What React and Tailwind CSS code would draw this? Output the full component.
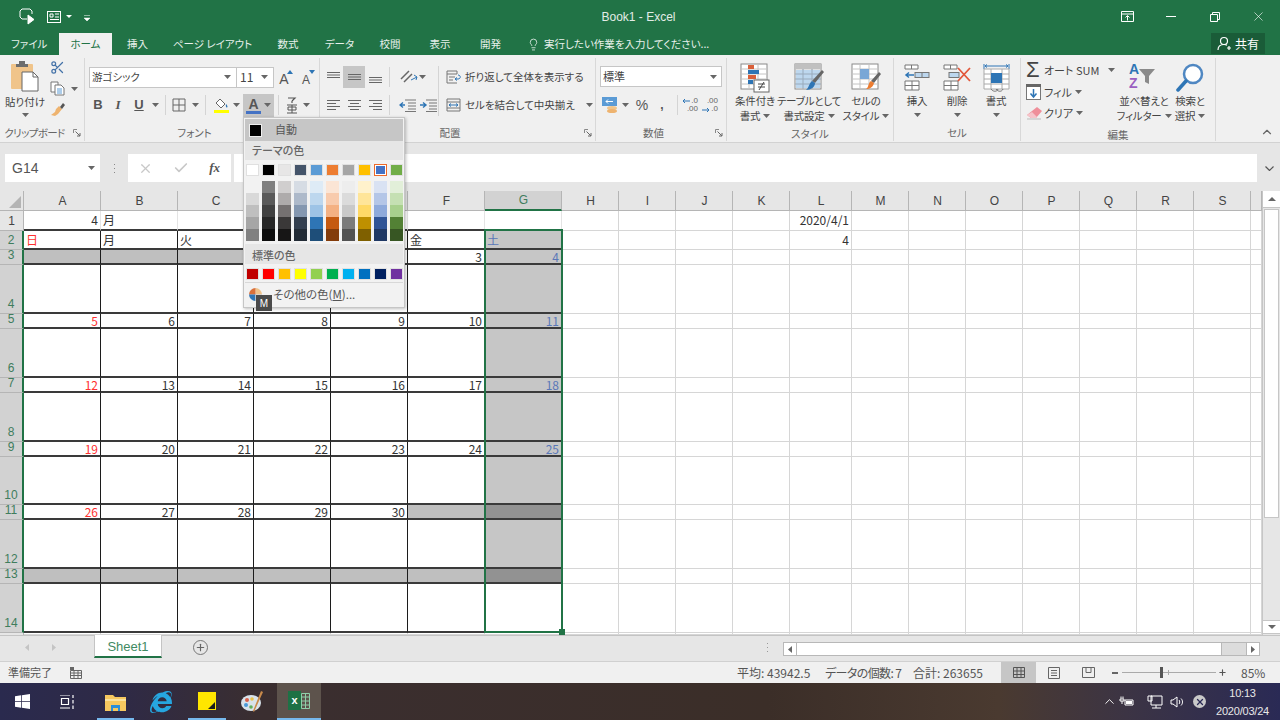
import { Fragment } from 'react'
import { Scissors, Lightbulb, ChevronUp, Check, X, Plus } from 'lucide-react'
import { FaInternetExplorer } from 'react-icons/fa'

const COLS = ['A', 'B', 'C', 'D', 'E', 'F', 'G', 'H', 'I', 'J', 'K', 'L', 'M', 'N', 'O', 'P', 'Q', 'R', 'S', '']
const ROW_COUNT = 15

const THEME = ['#ffffff', '#000000', '#e7e6e6', '#44546a', '#5b9bd5', '#ed7d31', '#a5a5a5', '#ffc000', '#4472c4', '#70ad47']
const SHADES = [
  ['#f2f2f2', '#d9d9d9', '#bfbfbf', '#a6a6a6', '#808080'],
  ['#7f7f7f', '#595959', '#404040', '#262626', '#0d0d0d'],
  ['#d0cece', '#aeabab', '#757171', '#3a3838', '#171616'],
  ['#d6dce4', '#adb9ca', '#8497b0', '#333f4f', '#222b35'],
  ['#deebf6', '#bdd7ee', '#9dc3e6', '#2e75b5', '#1e4e79'],
  ['#fbe5d5', '#f8cbad', '#f4b183', '#c55a11', '#833c0b'],
  ['#ededed', '#dbdbdb', '#c9c9c9', '#7b7b7b', '#525252'],
  ['#fff2cc', '#ffe599', '#ffd966', '#bf9000', '#7f6000'],
  ['#d9e2f3', '#b4c6e7', '#8eaadb', '#2f5496', '#1f3864'],
  ['#e2efd9', '#c5e0b3', '#a8d08d', '#538135', '#375623'],
]
const STANDARD = ['#c00000', '#ff0000', '#ffc000', '#ffff00', '#92d050', '#00b050', '#00b0f0', '#0070c0', '#002060', '#7030a0']

const WEEK = ['日', '月', '火', '水', '木', '金', '土']
const DATES = {
  2: [null, null, null, 1, 2, 3, 4],
  4: [5, 6, 7, 8, 9, 10, 11],
  6: [12, 13, 14, 15, 16, 17, 18],
  8: [19, 20, 21, 22, 23, 24, 25],
  10: [26, 27, 28, 29, 30, null, null],
}

function Chev({ className = '' }) {
  return (
    <svg width="7" height="4" viewBox="0 0 7 4" className={`shrink-0 ${className}`}>
      <path d="M0 0h7L3.5 4z" fill="#666" />
    </svg>
  )
}

function Launcher() {
  return (
    <svg width="8" height="8" viewBox="0 0 8 8" className="shrink-0">
      <path d="M.5 4V.5H4" fill="none" stroke="#888" />
      <path d="M2.5 2.5L7 7M7 4v3H4" fill="none" stroke="#666" />
    </svg>
  )
}

function Sep({ h = 'h-[20px]' }) {
  return <div className={`w-px ${h} bg-[#d4d4d4] shrink-0`} />
}

function Lines({ align }) {
  const rows = [13, 9, 13, 9]
  const x = w => (align === 'left' ? 1 : align === 'right' ? 14 - w : (15 - w) / 2)
  return (
    <svg width="15" height="12" viewBox="0 0 15 12">
      {rows.map((w, i) => (
        <rect key={i} x={x(w)} y={1 + i * 3} width={w} height="1" fill="#666" />
      ))}
    </svg>
  )
}

function VLines({ pos }) {
  const top = pos === 'top' ? 1 : pos === 'mid' ? 3 : 6
  return (
    <svg width="15" height="12" viewBox="0 0 15 12">
      {[0, 1, 2].map(i => (
        <rect key={i} x="1" y={top + i * 2.5} width="13" height="1" fill="#666" />
      ))}
    </svg>
  )
}

function Indent({ flip }) {
  return (
    <svg width="17" height="13" viewBox="0 0 17 13">
      <path d="M6 1h11M9 4h8M9 7h8M9 10h8M6 12.5h11" stroke="#777" fill="none" />
      <path d={flip ? 'M0 6h5M3 3.5L6 6l-3 2.5' : 'M6 6H1M4 3.5L1 6l3 2.5'} stroke="#2e75b5" strokeWidth="1.4" fill="none" />
    </svg>
  )
}

function PasteIcon() {
  return (
    <svg width="28" height="32" viewBox="0 0 28 32">
      <rect x="0" y="4" width="22" height="25" rx="1" fill="#f0c48a" />
      <path d="M5 4h12v3H5zM8 1h6v3H8z" fill="#6d6d6d" />
      <path d="M11 12h11l5 5v14H11z" fill="#fff" stroke="#666" />
      <path d="M22 12v5h5" fill="none" stroke="#666" />
    </svg>
  )
}

function CopyIcon() {
  return (
    <svg width="15" height="15" viewBox="0 0 15 15">
      <path d="M1 1h7v10H1z" fill="#fff" stroke="#777" />
      <path d="M5 4h6l3 3v7H5z" fill="#fff" stroke="#777" />
      <path d="M7 8h5M7 10h5M7 12h5" stroke="#5b9bd5" />
    </svg>
  )
}

function BrushIcon() {
  return (
    <svg width="16" height="15" viewBox="0 0 16 15">
      <path d="M9 4l3 3-4 5-3 2-4-1 4-3 1-3z" fill="#eeb36f" />
      <path d="M10 5l3-4 2 2-3 4z" fill="#555" />
    </svg>
  )
}

function BoxBorderIcon() {
  return (
    <svg width="14" height="14" viewBox="0 0 14 14">
      <path d="M1 1h12v12H1zM7 1v12M1 7h12" fill="none" stroke="#666" />
    </svg>
  )
}

function FillIcon() {
  return (
    <svg width="16" height="16" viewBox="0 0 16 16">
      <path d="M6 2l5 5-4 4-5-5z" fill="#fff" stroke="#666" />
      <path d="M12 7c1.500 1.500 2 3 1 3.500s-1.500-2-1-3.500z" fill="#2e75b5" />
      <rect x="0" y="13" width="15" height="3" fill="#ffff00" />
    </svg>
  )
}

function KanaIcon() {
  return (
    <svg width="12" height="17" viewBox="0 0 12 17">
      <path d="M2 1h7L6 4M6 4v2" stroke="#555" strokeWidth="1.200" fill="none" />
      <path d="M1 8h10M2 10h8v3H2zM6 8v8M1 16h10" stroke="#555" fill="none" />
    </svg>
  )
}

function GrowFont({ up }) {
  return (
    <div className="relative w-[18px] h-[18px] flex items-end justify-center">
      <span className={`text-[#555] leading-none font-['Liberation_Sans',sans-serif] ${up ? 'text-[14px]' : 'text-[12px]'}`}>A</span>
      <svg width="6" height="4" viewBox="0 0 6 4" className="absolute top-[2px] right-0">
        <path d={up ? 'M0 4h6L3 0z' : 'M0 0h6L3 4z'} fill="#2e75b5" />
      </svg>
    </div>
  )
}

function OrientIcon() {
  return (
    <svg width="20" height="16" viewBox="0 0 20 16">
      <path d="M2 10L10 2M5 13l8-8" stroke="#666" strokeWidth="1.500" fill="none" />
      <path d="M12 11l6-3M15 6l3 2-1 3" stroke="#2e75b5" fill="none" />
    </svg>
  )
}

function WrapIcon() {
  return (
    <svg width="16" height="14" viewBox="0 0 16 14" className="shrink-0">
      <path d="M1 1h10v3H1zM1 4v9h10M3 7h6M3 10h4" fill="none" stroke="#777" />
      <path d="M12 5c3 0 3 4 0 4H9M11 7.500L9 9l2 1.500" fill="none" stroke="#2e75b5" />
    </svg>
  )
}

function MergeIcon() {
  return (
    <svg width="15" height="14" viewBox="0 0 15 14" className="shrink-0">
      <path d="M1 1h13v12H1zM1 4h13M1 10h13" fill="none" stroke="#777" />
      <path d="M3 7h9M5 5.500L3 7l2 1.500M10 5.500L12 7l-2 1.500" fill="none" stroke="#2e75b5" />
    </svg>
  )
}

function AccountIcon() {
  return (
    <svg width="16" height="16" viewBox="0 0 16 16">
      <rect x="0" y="0" width="15" height="9" fill="#5b9bd5" />
      <path d="M4 4.500h7M6 2.500L4 4.500l2 2" stroke="#fff" fill="none" />
      <ellipse cx="10" cy="11" rx="5" ry="2" fill="#f0c48a" />
      <ellipse cx="10" cy="14" rx="5" ry="2" fill="#eeb36f" />
    </svg>
  )
}

function DecimalIcon({ flip }) {
  return (
    <div className="relative w-[16px] h-[17px] text-[#666] text-[8px] leading-[8px] font-['Liberation_Sans',sans-serif]">
      <div className="text-right">{flip ? '.00' : '.0'}</div>
      <div className="text-right">{flip ? '.0' : '.00'}</div>
      <svg width="8" height="6" viewBox="0 0 8 6" className={`absolute left-0 ${flip ? 'top-[10px]' : 'top-[1px]'}`}>
        <path d={flip ? 'M0 3h7M5 1l2 2-2 2' : 'M8 3H1M3 1L1 3l2 2'} stroke="#2e75b5" fill="none" />
      </svg>
    </div>
  )
}

function TableBase({ children }) {
  return (
    <svg width="30" height="30" viewBox="0 0 30 30">
      <rect x="1" y="1" width="26" height="25" fill="#fff" stroke="#8a8a8a" />
      <path d="M1 6h26M1 11h26M1 16h26M1 21h26M9 1v25M18 1v25" stroke="#c4c4c4" />
      {children}
    </svg>
  )
}

function CondIcon() {
  return (
    <TableBase>
      <rect x="8" y="2" width="6" height="4" fill="#d9603a" />
      <rect x="8" y="7" width="11" height="4" fill="#2e75b5" />
      <rect x="8" y="12" width="8" height="4" fill="#d9603a" />
      <rect x="8" y="17" width="5" height="4" fill="#2e75b5" />
      <rect x="14" y="17" width="15" height="12" fill="#fff" stroke="#666" />
      <path d="M18 21h7M18 24h7M24 19l-5 8" stroke="#444" fill="none" />
    </TableBase>
  )
}

function TableStyleIcon() {
  return (
    <TableBase>
      <rect x="1" y="1" width="26" height="5" fill="#c0c0c0" />
      <rect x="2" y="7" width="24" height="18" fill="#bdd7ee" />
      <path d="M1 11h26M1 16h26M1 21h26M9 6v20M18 6v20" stroke="#9ab" />
      <path d="M28 7l2 2-9 11-3-2z" fill="#666" />
      <path d="M18 18l3 2c0 4-4 7-9 7 3-2 3-7 6-9z" fill="#2e75b5" />
    </TableBase>
  )
}

function CellStyleIcon() {
  return (
    <TableBase>
      <rect x="9" y="6" width="9" height="10" fill="#7aa7d6" />
      <path d="M28 9l2 2-7 9-3-2z" fill="#666" />
      <path d="M20 18l3 2c-1 4-4 6-8 6 3-2 2-6 5-8z" fill="#ed7d31" />
    </TableBase>
  )
}

function InsertCellIcon() {
  return (
    <svg width="26" height="27" viewBox="0 0 26 27">
      <path d="M1 1h13v4H1zM7.500 1v4M1 17h14v9H1zM1 21.500h14M8 17v9" fill="#fff" stroke="#777" />
      <rect x="11" y="8.500" width="14" height="5" fill="#bdd7ee" stroke="#777" />
      <path d="M18 8.500v5" stroke="#777" />
      <path d="M10 11H2M5 8.500L2 11l3 2.500" stroke="#2e75b5" strokeWidth="1.500" fill="none" />
    </svg>
  )
}

function DeleteCellIcon() {
  return (
    <svg width="29" height="27" viewBox="0 0 29 27">
      <path d="M1 1h13v4H1zM7.500 1v4M1 17h14v9H1zM1 21.500h14M8 17v9" fill="#fff" stroke="#777" />
      <rect x="6" y="8.500" width="10" height="5" fill="#bdd7ee" stroke="#777" />
      <path d="M15 4l12 13M27 4L15 17" stroke="#e2573a" strokeWidth="1.800" />
    </svg>
  )
}

function FormatCellIcon() {
  return (
    <svg width="27" height="29" viewBox="0 0 27 29">
      <path d="M1 1v5M26 1v5M2 3h23M4 1.500L2 3l2 1.500M23 1.500L25 3l-2 1.500" stroke="#2e75b5" fill="none" />
      <path d="M1 6h25v20H1zM1 11h25M1 16h25M1 21h25M8 6v20M19 6v20" fill="#fff" stroke="#aaa" />
      <rect x="8" y="10" width="11" height="10" fill="#2e75b5" />
      <path d="M8 26c2 3 6 3 7 0M13 26c2 3 6 3 7 0" stroke="#777" fill="none" />
    </svg>
  )
}

function FillDownIcon() {
  return (
    <svg width="15" height="16" viewBox="0 0 15 16">
      <rect x="0.500" y="0.500" width="14" height="15" fill="#fff" stroke="#777" />
      <rect x="0" y="0" width="15" height="3" fill="#666" />
      <path d="M7.500 5v8M4.500 9.500l3 3.500 3-3.500" stroke="#2e75b5" strokeWidth="1.500" fill="none" />
    </svg>
  )
}

function EraserIcon() {
  return (
    <svg width="17" height="14" viewBox="0 0 17 14">
      <path d="M11 1l5 4-6 7H5L1 9z" fill="#ef8f9a" />
      <path d="M1 9l4 3h5l1-1-5-5z" fill="#f6c4ca" />
      <path d="M1 13h14" stroke="#bbb" />
    </svg>
  )
}

function SortIcon() {
  return (
    <div className="relative w-[30px] h-[31px] flex">
      <div className="flex flex-col text-[14px] leading-[14px] font-bold font-['Liberation_Sans',sans-serif]">
        <span className="text-[#2e75b5]">A</span>
        <span className="text-[#9a5fc0]">Z</span>
      </div>
      <svg width="16" height="15" viewBox="0 0 16 15" className="mt-[7px]">
        <path d="M0 0h16l-6 7v8l-4-2V7z" fill="#8a8a8a" />
      </svg>
    </div>
  )
}

function FindIcon() {
  return (
    <svg width="28" height="29" viewBox="0 0 28 29">
      <circle cx="17" cy="11" r="9" fill="#fff" stroke="#4f87c2" strokeWidth="2.500" />
      <path d="M10 18L2 27" stroke="#2e75b5" strokeWidth="3.500" strokeLinecap="round" />
    </svg>
  )
}

function BigButton({ w, iconH = 'h-[33px]', icon, lines, chevBelow }) {
  return (
    <div className={`${w} flex flex-col items-center shrink-0`}>
      <div className={`${iconH} flex items-center justify-center`}>{icon}</div>
      {lines.map((l, i) => (
        <div key={i} className="h-[15px] flex items-center gap-[3px] whitespace-nowrap text-[10.5px] tracking-[-0.2px]">
          {l}
          {i === lines.length - 1 && !chevBelow && <Chev />}
        </div>
      ))}
      {chevBelow && <div className="h-[14px] flex items-center"><Chev /></div>}
    </div>
  )
}

function Group({ w, label, launcher, children }) {
  return (
    <div className={`${w} h-[83px] shrink-0 flex flex-col border-r border-[#d8d8d8]`}>
      <div className="h-[66px] flex">{children}</div>
      <div className={`relative flex-1 flex items-center justify-center pt-[3px] whitespace-nowrap text-[10.5px] text-[#666] ${launcher ? 'pr-[15px]' : ''}`}>
        {label}
        {launcher && <div className="absolute right-[3px] top-[7px]"><Launcher /></div>}
      </div>
    </div>
  )
}

function Ribbon() {
  return (
    <div className="h-[88px] bg-[#f0f0f0] border-b border-[#d2d2d2] pt-[3px] flex text-[#444] font-['Noto_Sans_CJK_JP',sans-serif]">
      <Group w="w-[85px]" label={<span className="tracking-[-0.6px]">クリップボード</span>} launcher>
        <div className="w-[50px] flex flex-col items-center pt-[2px]">
          <PasteIcon />
          <div className="mt-[2px] h-[15px] flex items-center text-[10.5px]">貼り付け</div>
          <div className="h-[12px] flex items-center"><Chev /></div>
        </div>
        <div className="flex flex-col gap-[6px] pt-[2px]">
          <Scissors size={15} color="#4472a8" />
          <div className="flex items-center gap-[6px]"><CopyIcon /><Chev /></div>
          <BrushIcon />
        </div>
      </Group>

      <Group w="w-[235px]" label="フォント" launcher>
        <div className="flex flex-col pl-[4px] pt-[8px]">
          <div className="h-[22px] flex items-center">
            <div className="w-[148px] h-[21px] bg-white border border-[#c6c6c6] flex items-center justify-between pl-[2px] pr-[5px] text-[10.5px]">
              游ゴシック<Chev />
            </div>
            <div className="w-[37px] h-[21px] bg-white border border-l-0 border-[#c6c6c6] flex items-center justify-between pl-[3px] pr-[5px] text-[12px]">
              11<Chev />
            </div>
            <div className="flex gap-[4px] ml-[1px]"><GrowFont up /><GrowFont /></div>
          </div>
          <div className="h-[24px] mt-[5px] flex items-center text-[#555] font-['Liberation_Sans',sans-serif] text-[13px]">
            <span className="w-[18px] text-center font-bold">B</span>
            <span className="w-[22px] text-center italic font-['Liberation_Serif',serif] font-bold">I</span>
            <span className="w-[20px] text-center underline font-bold">U</span>
            <Chev className="ml-[3px] mr-[6px]" />
            <Sep />
            <div className="ml-[6px] mr-[6px]"><BoxBorderIcon /></div>
            <Chev className="mr-[6px]" />
            <Sep />
            <div className="ml-[8px] mr-[3px]"><FillIcon /></div>
            <Chev className="mr-[3px]" />
            <div className="w-[31px] h-[23px] bg-[#c6c6c6] flex items-center gap-[3px] pl-[3px]">
              <div className="flex flex-col items-center w-[15px]">
                <span className="text-[14px] leading-[14px] font-bold text-[#555]">A</span>
                <div className="w-[15px] h-[3px] bg-[#4472c4]" />
              </div>
              <Chev />
            </div>
            <div className="mx-[4px]"><Sep /></div>
            <div className="ml-[3px] mr-[5px]"><KanaIcon /></div>
            <Chev />
          </div>
        </div>
      </Group>

      <Group w="w-[276px]" label="配置" launcher>
        <div className="w-[118px] shrink-0 flex flex-col pl-[3px] pt-[8px]">
          <div className="h-[22px] flex items-center">
            <div className="w-[20px] flex justify-center"><VLines pos="top" /></div>
            <div className="w-[22px] h-[22px] bg-[#c6c6c6] flex justify-center items-center"><VLines pos="mid" /></div>
            <div className="w-[20px] flex justify-center"><VLines pos="bot" /></div>
            <div className="mx-[4px]"><Sep /></div>
            <div className="ml-[5px]"><OrientIcon /></div>
            <Chev />
          </div>
          <div className="h-[24px] mt-[5px] flex items-center">
            <div className="w-[20px] flex justify-center"><Lines align="left" /></div>
            <div className="w-[22px] flex justify-center"><Lines align="center" /></div>
            <div className="w-[20px] flex justify-center"><Lines align="right" /></div>
            <div className="mx-[4px]"><Sep /></div>
            <div className="ml-[5px] mr-[4px]"><Indent /></div>
            <Indent flip />
          </div>
        </div>
        <div className="mr-[7px] mt-[8px] h-[50px]"><Sep h="h-[50px]" /></div>
        <div className="flex flex-col pt-[8px] text-[10.5px]">
          <div className="h-[22px] flex items-center gap-[3px] whitespace-nowrap"><WrapIcon />折り返して全体を表示する</div>
          <div className="h-[24px] mt-[5px] flex items-center gap-[4px] whitespace-nowrap"><MergeIcon />セルを結合して中央揃え<Chev className="ml-[7px]" /></div>
        </div>
      </Group>

      <Group w="w-[131px]" label="数値" launcher>
        <div className="flex flex-col pl-[4px] pt-[8px]">
          <div className="w-[122px] h-[21px] bg-white border border-[#c6c6c6] flex items-center justify-between pl-[2px] pr-[4px] text-[11px]">
            標準<Chev />
          </div>
          <div className="h-[24px] mt-[6px] flex items-center pl-[2px]">
            <AccountIcon />
            <Chev className="ml-[4px] mr-[4px]" />
            <span className="w-[18px] text-center text-[14px] text-[#555] font-['Liberation_Sans',sans-serif]">%</span>
            <span className="w-[22px] text-center text-[12px] font-bold text-[#555] font-['Liberation_Sans',sans-serif]">,</span>
            <div className="ml-[4px] mr-[4px]"><Sep /></div>
            <DecimalIcon />
            <div className="ml-[4px]"><DecimalIcon flip /></div>
          </div>
        </div>
      </Group>

      <Group w="w-[167px]" label="スタイル">
        <div className="pl-[1px] flex pt-[5px]">
          <BigButton w="w-[54px]" iconH="h-[30px]" icon={<CondIcon />} lines={['条件付き', '書式']} />
          <BigButton w="w-[54px]" iconH="h-[30px]" icon={<TableStyleIcon />} lines={['テーブルとして', '書式設定']} />
          <BigButton w="w-[60px]" iconH="h-[30px]" icon={<CellStyleIcon />} lines={['セルの', 'スタイル']} />
        </div>
      </Group>

      <Group w="w-[127px]" label="セル">
        <div className="pl-[3px] flex pt-[3px]">
          <BigButton w="w-[40px]" iconH="h-[32px]" icon={<InsertCellIcon />} lines={['挿入']} chevBelow />
          <BigButton w="w-[40px]" iconH="h-[32px]" icon={<DeleteCellIcon />} lines={['削除']} chevBelow />
          <BigButton w="w-[38px]" iconH="h-[32px]" icon={<FormatCellIcon />} lines={['書式']} chevBelow />
        </div>
      </Group>

      <Group w="w-[195px]" label="編集">
        <div className="w-[97px] flex flex-col pl-[5px] pt-[1px] text-[11px]">
          <div className="h-[22px] flex items-center whitespace-nowrap">
            <span className="w-[18px] text-[22px] leading-none text-[#444] font-['Liberation_Sans',sans-serif]">Σ</span>
            <span className="w-[58px]">オート SUM</span>
            <Chev className="ml-[6px]" />
          </div>
          <div className="h-[22px] flex items-center"><div className="w-[18px]"><FillDownIcon /></div>フィル<Chev className="ml-[3px]" /></div>
          <div className="h-[22px] flex items-center"><div className="w-[18px]"><EraserIcon /></div>クリア<Chev className="ml-[3px]" /></div>
        </div>
        <BigButton w="w-[52px]" iconH="h-[35px]" icon={<div className="pt-[4px]"><SortIcon /></div>} lines={['並べ替えと', 'フィルター']} />
        <BigButton w="w-[40px]" iconH="h-[35px]" icon={<div className="pt-[4px]"><FindIcon /></div>} lines={['検索と', '選択']} />
      </Group>

      <div className="flex-1 flex items-end justify-end pr-[6px] pb-[3px]">
        <ChevronUp size={14} color="#666" />
      </div>
    </div>
  )
}

function Titlebar() {
  return (
    <div className="h-[33px] bg-[#217346] flex items-center text-[#e3ece7] font-['Liberation_Sans',sans-serif]">
      <div className="w-[590px] flex items-center pl-[19px]">
        <svg width="17" height="17" viewBox="0 0 17 17" fill="none" stroke="#fff">
          <path d="M8 11H3l-2-2V3l2-2h8l2 2v3" />
          <path d="M9 7v9l6-4.500z" fill="#fff" />
        </svg>
        <svg width="14" height="12" viewBox="0 0 14 12" className="ml-[11px]" fill="none" stroke="#fff">
          <rect x="0.500" y="0.500" width="13" height="11" />
          <path d="M3 3h3v3H3zM8 3h4M8 6h4M3 8.500h9" />
        </svg>
        <svg width="6" height="3" viewBox="0 0 6 3" className="ml-[5px]"><path d="M0 0h6L3 3z" fill="#fff" /></svg>
        <svg width="6" height="6" viewBox="0 0 6 6" className="ml-[12px] mt-[2px]"><path d="M0 .5h6M0 3h6L3 6z" fill="#fff" stroke="#fff" strokeWidth=".5" /></svg>
      </div>
      <div className="w-[97px] text-center text-[12px] whitespace-nowrap">Book1 - Excel</div>
      <div className="flex-1 flex items-center justify-end">
        <div className="w-[44px] flex justify-center">
          <svg width="13" height="11" viewBox="0 0 13 11" fill="none" stroke="#fff"><path d="M.5.5h12v10H.5zM.5 3h12M6.500 9.500V5M4.500 6.500l2-2 2 2" /></svg>
        </div>
        <div className="w-[44px] flex justify-center"><div className="w-[10px] h-px bg-white" /></div>
        <div className="w-[43px] flex justify-center">
          <svg width="10" height="10" viewBox="0 0 10 10" fill="none" stroke="#fff"><path d="M.5 2.500h7v7h-7zM2.500 2.500v-2h7v7h-2" /></svg>
        </div>
        <div className="w-[44px] flex justify-center"><X size={15} color="#fff" strokeWidth={1} /></div>
      </div>
    </div>
  )
}

const TABS = [
  ['w-[59px] pl-[11px] text-left', 'ファイル'],
  ['w-[53px] text-center bg-[#f0f0f0] text-[#217346]', 'ホーム'],
  ['w-[51px] text-center', '挿入'],
  ['w-[99px] text-center', 'ページ レイアウト'],
  ['w-[52px] text-center', '数式'],
  ['w-[51px] text-center', 'データ'],
  ['w-[50px] text-center', '校閲'],
  ['w-[50px] text-center', '表示'],
  ['w-[51px] text-center', '開発'],
]

function Tabs() {
  return (
    <div className="h-[22px] bg-[#217346] flex text-[#e8f1ec] text-[10.5px] leading-[22px] font-['Noto_Sans_CJK_JP',sans-serif]">
      {TABS.map(([cls, label]) => (
        <div key={label} className={`h-[22px] whitespace-nowrap ${cls}`}>{label}</div>
      ))}
      <div className="flex items-center pl-[11px] gap-[4px] whitespace-nowrap">
        <Lightbulb size={13} color="#e8f1ec" strokeWidth={1.500} />
        実行したい作業を入力してください...
      </div>
      <div className="ml-auto mr-[15px] w-[54px] h-[21px] bg-[#1a5c38] flex items-center justify-center gap-[3px] text-[12px] text-white">
        <svg width="15" height="15" viewBox="0 0 15 15" fill="none" stroke="#fff" strokeWidth="1.200">
          <circle cx="7" cy="5" r="3.500" />
          <path d="M1 14c0-4 3-5.500 6-5.500 1 0 2 .2 3 .6M10 12h4M12 10v4" />
        </svg>
        共有
      </div>
    </div>
  )
}

function FormulaBar() {
  return (
    <div className="h-[48px] bg-[#e6e6e6] flex items-center pt-[2px] pl-[5px] pr-[5px] font-['Liberation_Sans',sans-serif]">
      <div className="w-[95px] h-[28px] bg-white flex items-center justify-between pl-[7px] pr-[5px] text-[14px] text-[#555]">
        G14<Chev />
      </div>
      <div className="w-[28px] flex justify-center">
        <svg width="3" height="11" viewBox="0 0 3 11"><path d="M1 1h1v1H1zM1 5h1v1H1zM1 9h1v1H1z" fill="#888" /></svg>
      </div>
      <div className="w-[103px] h-[28px] bg-white flex items-center justify-between pl-[10px] pr-[11px]">
        <X size={15} color="#c8c8c8" strokeWidth={2} />
        <Check size={16} color="#c8c8c8" strokeWidth={2.500} />
        <span className="text-[13px] italic font-bold text-[#555] font-['Liberation_Serif',serif]">fx</span>
      </div>
      <div className="ml-[3px] flex-1 h-[28px] bg-white" />
      <div className="w-[18px] flex justify-end pr-[1px]">
        <svg width="9" height="5" viewBox="0 0 9 5" fill="none" stroke="#555" strokeWidth="1.200"><path d="M.5.500l4 4 4-4" /></svg>
      </div>
    </div>
  )
}

function cellContent(r, c) {
  if (r === 0 && c === 0) return { text: '4', right: true }
  if (r === 0 && c === 1) return { text: '月' }
  if (r === 0 && c === 11) return { text: '2020/4/1', right: true }
  if (r === 1 && c === 11) return { text: '4', right: true }
  if (r === 1 && c < 7) return { text: WEEK[c], cal: true }
  if (DATES[r] && c < 7 && DATES[r][c] != null) return { text: DATES[r][c], right: true, cal: true }
  return null
}

function cellFill(r, c) {
  if (c === 6 && r >= 1 && r <= 12) return r === 10 || r === 12 ? 'bg-[#929292]' : 'bg-[#c6c6c6]'
  if (r === 2 && c < 3) return 'bg-[#bfbfbf]'
  if (r === 10 && c === 5) return 'bg-[#bfbfbf]'
  if (r === 12 && c < 6) return 'bg-[#bfbfbf]'
  return 'bg-white'
}

function cellBorder(r, c) {
  const inCal = c < 7 && r >= 1 && r < 14
  const right = inCal ? 'border-r-[#1c1c1c]' : c < 7 && r === 0 ? 'border-r-[#e4e4e4]' : 'border-r-[#d6d6d6]'
  const bottom = c < 7 && r < 14 ? 'border-b-2 border-b-[#3a3a3a]' : 'border-b border-b-[#d6d6d6]'
  return `${right} ${bottom}`
}

function Sheet() {
  return (
    <div className="relative h-[444px] flex bg-[#e6e6e6] overflow-hidden">
      <div className="grid grid-cols-[24px_77px_77px_76px_77px_77px_77px_77px_57px_57px_57px_57px_62px_57px_57px_57px_57px_57px_57px_57px_11px] grid-rows-[20px_20px_19px_15px_49px_15px_49px_15px_49px_15px_48px_15px_49px_15px_49px_2px] w-[1262px] font-['Noto_Sans_CJK_JP',sans-serif] text-[12px] text-[#333]">
        <div className="bg-[#e6e6e6] border-r border-b border-[#b5b5b5] flex items-end justify-end pr-[2px] pb-[2px]">
          <svg width="12" height="12" viewBox="0 0 12 12"><path d="M12 0v12H0z" fill="#b4b4b4" /></svg>
        </div>
        {COLS.map(col => (
          <div
            key={col || 'end'}
            className={
              col === 'G'
                ? 'bg-[#d2d2d2] border-r border-b-2 border-r-[#b5b5b5] border-b-[#217346] flex items-center justify-center pl-px text-[#3f7d5d] font-["Liberation_Sans",sans-serif] text-[12px]'
                : 'bg-[#e6e6e6] border-r border-b border-[#b5b5b5] flex items-center justify-center pl-px text-[#444] font-["Liberation_Sans",sans-serif] text-[12px]'
            }
          >
            {col}
          </div>
        ))}
        {Array.from({ length: ROW_COUNT }, (_, r) => (
          <Fragment key={r}>
            <div
              className={
                r >= 1 && r <= 13
                  ? 'bg-[#d2d2d2] border-r-2 border-r-[#217346] border-b border-b-[#b5b5b5] flex items-end justify-center pb-[3px] text-[#3f7d5d] leading-[11px] font-["Liberation_Sans",sans-serif] text-[12px]'
                  : 'bg-[#e6e6e6] border-r border-b border-[#b5b5b5] flex items-end justify-center pb-[2px] text-[#444] leading-[13px] font-["Liberation_Sans",sans-serif] text-[12px]'
              }
            >
              {r < 14 ? r + 1 : ''}
            </div>
            {COLS.map((_col, c) => {
              const content = cellContent(r, c)
              const color = content?.cal && c === 0
                ? 'text-[#ff3030]'
                : content?.cal && c === 6
                  ? 'text-[#5a78b8]'
                  : 'text-[#333]'
              return (
                <div
                  key={c}
                  className={`border-r leading-[13px] px-[2px] whitespace-nowrap ${cellFill(r, c)} ${cellBorder(r, c)} ${color} ${content?.right ? 'text-right' : 'text-left'} ${r === 0 || r === 1 ? 'pt-[2px]' : ''}`}
                >
                  {content?.text}
                </div>
              )
            })}
          </Fragment>
        ))}
      </div>

      <div className="w-[18px] flex flex-col items-center border-l border-[#c6c6c6] bg-[#e6e6e6]">
        <div className="h-[17px] w-full bg-white border-b border-[#c6c6c6] flex items-center justify-center">
          <svg width="8" height="4" viewBox="0 0 8 4"><path d="M0 4h8L4 0z" fill="#666" /></svg>
        </div>
        <div className="mt-[1px] h-[309px] w-[15px] bg-white border border-[#c6c6c6]" />
        <div className="mt-auto h-[14px] mb-[1px] w-full bg-white border-y border-[#c6c6c6] flex items-center justify-center">
          <svg width="8" height="4" viewBox="0 0 8 4"><path d="M0 0h8L4 4z" fill="#666" /></svg>
        </div>
      </div>

      <div className="absolute left-[484px] top-[38px] w-[79px] h-[404px] border-2 border-[#217346]">
        <div className="absolute -right-[4px] -bottom-[4px] w-[6px] h-[6px] bg-[#217346]" />
      </div>
    </div>
  )
}

function SheetTabs() {
  return (
    <div className="h-[26px] bg-[#e6e6e6] border-t border-[#c4c4c4] flex items-start font-['Liberation_Sans',sans-serif]">
      <div className="w-[94px] h-[22px] flex items-center pl-[25px] gap-[23px]">
        <svg width="4" height="7" viewBox="0 0 4 7"><path d="M4 0v7L0 3.500z" fill="#c4c4c4" /></svg>
        <svg width="4" height="7" viewBox="0 0 4 7"><path d="M0 0v7l4-3.500z" fill="#c4c4c4" /></svg>
      </div>
      <div className="w-[68px] h-[23px] -mt-px pt-[2px] bg-white border-x border-[#c4c4c4] border-b-2 border-b-[#217346] flex items-center justify-center text-[13px] text-[#3f8a62]">
        Sheet1
      </div>
      <div className="ml-[31px] h-[23px] flex items-center">
        <div className="w-[15px] h-[15px] rounded-full border border-[#777] flex items-center justify-center">
          <Plus size={11} color="#666" strokeWidth={2.500} />
        </div>
      </div>
      <div className="ml-[558px] h-[23px] flex items-center">
        <svg width="3" height="11" viewBox="0 0 3 11"><path d="M1 1h1v1H1zM1 5h1v1H1zM1 9h1v1H1z" fill="#999" /></svg>
      </div>
      <div className="ml-[14px] mt-[6px] w-[477px] h-[14px] flex border border-[#b8b8b8] bg-[#dcdcdc]">
        <div className="w-[13px] bg-white border-r border-[#b8b8b8] flex items-center justify-center">
          <svg width="4" height="7" viewBox="0 0 4 7"><path d="M4 0v7L0 3.500z" fill="#666" /></svg>
        </div>
        <div className="w-[425px] bg-white border-r border-[#b8b8b8]" />
        <div className="ml-auto w-[13px] bg-white border-l border-[#b8b8b8] flex items-center justify-center">
          <svg width="4" height="7" viewBox="0 0 4 7"><path d="M0 0v7l4-3.500z" fill="#666" /></svg>
        </div>
      </div>
    </div>
  )
}

function StatusBar() {
  return (
    <div className="h-[22px] bg-[#f0f0f0] border-t border-[#d0d0d0] flex items-center text-[12px] text-[#555] font-['Noto_Sans_CJK_JP',sans-serif] whitespace-nowrap">
      <span className="pl-[8px] w-[70px] text-[11px]">準備完了</span>
      <svg width="12" height="12" viewBox="0 0 12 12" fill="none" stroke="#666">
        <path d="M.5 3.500h11v8H.5zM.5 6h11M.5 8.500h11M4 3.500v8M8 3.500v8" />
        <rect x="0" y="0" width="4" height="3" fill="#666" stroke="none" />
      </svg>
      <div className="ml-[655px] flex items-center h-full">
        <span className="w-[88px]">平均: 43942.5</span>
        <span className="w-[88px] tracking-[-0.6px]">データの個数: 7</span>
        <span className="w-[88px]">合計: 263655</span>
        <div className="w-[35px] h-full bg-[#c6c6c6] flex items-center justify-center">
          <svg width="12" height="11" viewBox="0 0 12 11" fill="none" stroke="#555"><path d="M.5.500h11v10H.5zM.5 4h11M.5 7.500h11M4 .500v10M8 .500v10" /></svg>
        </div>
        <div className="w-[35px] flex justify-center">
          <svg width="12" height="12" viewBox="0 0 12 12" fill="none" stroke="#666"><path d="M.5.500h11v11H.5zM3 3.500h6M3 6h6M3 8.500h6" /></svg>
        </div>
        <div className="w-[35px] flex justify-center">
          <svg width="13" height="11" viewBox="0 0 13 11" fill="none" stroke="#666"><path d="M.5.500h12v10H.5zM4 .500v5h5v-5" /></svg>
        </div>
        <div className="w-[6px] h-[2px] bg-[#666] ml-[6px] shrink-0" />
        <div className="relative w-[94px] h-px bg-[#aaa] ml-[4px] shrink-0">
          <div className="absolute left-[38px] -top-[5px] w-[3px] h-[11px] bg-[#555]" />
          <div className="absolute left-[46px] -top-[2px] w-px h-[5px] bg-[#aaa]" />
        </div>
        <div className="ml-[2px]"><Plus size={9} color="#555" strokeWidth={3} /></div>
        <span className="ml-[14px]">85%</span>
      </div>
    </div>
  )
}

function Taskbar() {
  return (
    <div className="h-[37px] flex items-stretch text-white bg-[linear-gradient(90deg,#2a2a4e_0%,#2f2a45_10%,#3a2e30_20%,#3b2e28_60%,#4a3a30_78%,#3c3444_88%,#2a2a55_100%)]">
      <div className="w-[44px] flex items-center justify-center">
        <svg width="15" height="15" viewBox="0 0 16 16" fill="#fff">
          <path d="M0 2.300L6.500 1.400V7.600H0zM7.300 1.300L16 0V7.600H7.300zM0 8.400H6.500V14.600L0 13.700zM7.300 8.400H16V16L7.300 14.700z" />
        </svg>
      </div>
      <div className="w-[46px] flex items-center justify-center">
        <svg width="16" height="14" viewBox="0 0 16 14" fill="none" stroke="#fff">
          <path d="M1 0h10M1 13h10M2.500 3.500h7v6h-7zM14 0v3M14 5v3.500M14 10.500V14" strokeWidth="1.200" />
        </svg>
      </div>
      <div className="w-[37px] ml-[7px] flex flex-col items-center justify-end border-b-2 border-[#76b9ed]">
        <svg width="21" height="18" viewBox="0 0 21 18" className="mb-[7px]">
          <path d="M0 2h8l2 2h11v14H0z" fill="#f6c85f" />
          <path d="M0 6h21v2H0z" fill="#fbe29c" />
          <path d="M6 12h9v6h-2v-3H8v3H6z" fill="#2a8ed8" />
        </svg>
      </div>
      <div className="w-[44px] ml-[5px] flex items-center justify-center">
        <FaInternetExplorer size={22} color="#26a6e0" />
      </div>
      <div className="w-[38px] ml-[5px] flex items-center justify-center border-b-2 border-[#76b9ed]">
        <svg width="18" height="18" viewBox="0 0 18 18">
          <rect width="18" height="18" fill="#ffe600" />
          <path d="M17 10v7h-7z" fill="#1c1c1c" />
        </svg>
      </div>
      <div className="w-[44px] ml-[4px] flex items-center justify-center">
        <svg width="22" height="22" viewBox="0 0 22 22">
          <ellipse cx="10" cy="12" rx="10" ry="8" fill="#d8e2ea" />
          <circle cx="6" cy="9" r="2" fill="#d9604a" />
          <circle cx="11" cy="8" r="1.800" fill="#e8c24a" />
          <circle cx="5" cy="14" r="2" fill="#4a9ad9" />
          <circle cx="10" cy="16" r="1.800" fill="#62b05a" />
          <path d="M20 0l2 1-9 20-1-1z" fill="#c98a4a" />
        </svg>
      </div>
      <div className="w-[44px] ml-[3px] bg-[#5d534c] flex items-center justify-center border-b-2 border-[#76b9ed]">
        <div className="flex items-center">
          <div className="w-[13px] h-[19px] bg-[#1e7145] flex items-center justify-center text-[11px] font-bold font-['Liberation_Sans',sans-serif]">x</div>
          <svg width="9" height="16" viewBox="0 0 9 16" fill="none" stroke="#8fcfa8"><path d="M.5.500h8v15h-8zM.5 4h8M.5 8h8M.5 12h8M4.500 .500v15" /></svg>
        </div>
      </div>
      <div className="ml-auto flex items-center pr-[6px] font-['Liberation_Sans',sans-serif]">
        <ChevronUp size={15} color="#fff" strokeWidth={1.500} />
        <svg width="15" height="12" viewBox="0 0 15 12" className="ml-[2px]" fill="none" stroke="#fff">
          <path d="M2 .5v2M4 .5v2M1 3h4v2H1zM3 5v3M6 4h8v5H6z" />
          <rect x="7" y="5" width="6" height="3" fill="#fff" stroke="none" />
        </svg>
        <svg width="16" height="14" viewBox="0 0 16 14" className="ml-[13px]" fill="none" stroke="#fff">
          <path d="M4 1h11v9H4zM1 1h4v5H1zM9 10v3M5 13h9" />
        </svg>
        <svg width="15" height="12" viewBox="0 0 15 12" className="ml-[7px]" fill="none" stroke="#fff">
          <path d="M1 4h2l4-3v10L3 8H1zM9 4c1 1 1 3 0 4M11 2.500c2 2 2 5 0 7" />
        </svg>
        <div className="ml-[8px] w-[13px] h-[13px] rounded-full bg-[#c9c9c9] flex items-center justify-center">
          <X size={10} color="#2a2a55" strokeWidth={3} />
        </div>
        <div className="w-[63px] ml-[5px] text-center text-[11px] leading-[18px] text-[#e8e8e8] tracking-[-0.2px]">
          <div>10:13</div>
          <div>2020/03/24</div>
        </div>
      </div>
    </div>
  )
}

function ColorMenu() {
  return (
    <div className="absolute left-[243px] top-[117px] w-[162px] h-[191px] bg-[#f2f2f2] border border-[#c6c6c6] shadow-[1px_1px_3px_rgba(0,0,0,0.25)] font-['Noto_Sans_CJK_JP',sans-serif] text-[#555] text-[11px]">
      <div className="mx-px mt-px h-[22px] bg-[#c6c6c6] flex items-center pl-[4px] gap-[13px]">
        <div className="w-[13px] h-[13px] bg-black border border-[#eee]" />
        <span className="-mt-[2px]">自動</span>
      </div>
      <div className="h-[19px] mx-px bg-[#e6e6e6] flex items-center pl-[7px] font-medium text-[#666]">テーマの色</div>
      <div className="flex gap-[3px] pl-[2px] pt-[4px]">
        {THEME.map(color => (
          <div
            key={color}
            className={color === '#4472c4'
              ? 'w-[13px] h-[12px] border border-[#ee6a2a] outline outline-white -outline-offset-2'
              : 'w-[13px] h-[12px] border border-[#e0e0e0]'}
            style={{ backgroundColor: color }}
          />
        ))}
      </div>
      <div className="flex gap-[3px] pl-[2px] pt-[5px]">
        {SHADES.map((col, i) => (
          <div key={i} className="w-[13px] flex flex-col">
            {col.map(color => (
              <div key={color} className="h-[12px]" style={{ backgroundColor: color }} />
            ))}
          </div>
        ))}
      </div>
      <div className="mt-[3px] h-[20px] mx-px bg-[#e6e6e6] flex items-center pl-[7px] font-medium text-[#666] pt-[2px]">標準の色</div>
      <div className="flex gap-[3px] pl-[2px] pt-[4px]">
        {STANDARD.map(color => (
          <div key={color} className="w-[13px] h-[12px] border border-[#e0e0e0]" style={{ backgroundColor: color }} />
        ))}
      </div>
      <div className="mt-[2px] h-px mx-px bg-[#d8d8d8]" />
      <div className="relative h-[23px] flex items-center pl-[4px] gap-[10px] text-[11.5px]">
        <svg width="15" height="15" viewBox="0 0 15 15">
          <path d="M7.500 7.500V1A6.500 6.500 0 0 1 14 7.500z" fill="#efc28a" />
          <path d="M7.500 7.500V1A6.500 6.500 0 0 0 1 7.500z" fill="#d9703a" />
          <path d="M7.500 7.500H1a6.500 6.500 0 0 0 6.500 6.500z" fill="#2e75b5" />
          <path d="M7.500 7.500H14a6.500 6.500 0 0 1-6.500 6.500z" fill="#c9c9c9" />
        </svg>
        <span>その他の色(<span className="underline">M</span>)...</span>
        <div className="absolute left-[12px] top-[12px] w-[16px] h-[16px] bg-[#4a4a4a] text-white text-[10px] flex items-center justify-center font-['Liberation_Sans',sans-serif]">M</div>
      </div>
    </div>
  )
}

export default function App() {
  return (
    <div className="relative w-[1280px] h-[720px] overflow-hidden flex flex-col [font-feature-settings:'palt']">
      <Titlebar />
      <Tabs />
      <Ribbon />
      <FormulaBar />
      <Sheet />
      <SheetTabs />
      <StatusBar />
      <Taskbar />
      <ColorMenu />
    </div>
  )
}
